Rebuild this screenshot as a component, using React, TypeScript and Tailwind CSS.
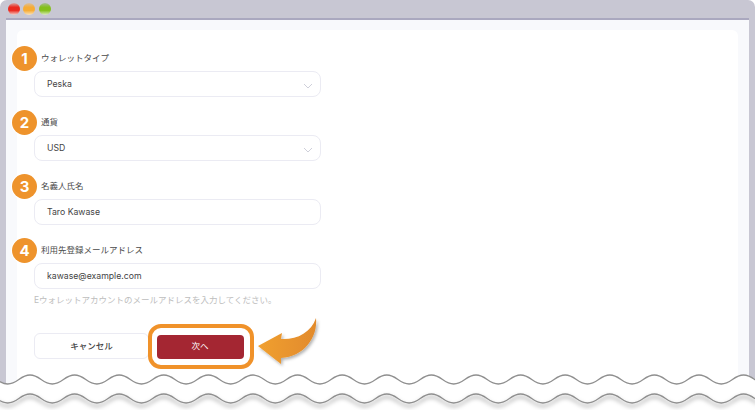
import React from "react";

const PERIOD = 44.6;
function wave(y: number, amp: number, phase: number) {
  let d = `M ${-PERIOD + phase} ${y - amp}`;
  for (let x = -PERIOD + phase; x < 800; x += PERIOD) {
    d += ` C ${x + PERIOD * 0.22} ${y - amp}, ${x + PERIOD * 0.28} ${y + amp}, ${x + PERIOD / 2} ${y + amp}`;
    d += ` S ${x + PERIOD * 0.78} ${y - amp}, ${x + PERIOD} ${y - amp}`;
  }
  return d;
}

function Badge({ n }: { n: number }) {
  return (
    <div className="absolute left-[-22px] top-[-6px] flex h-[25px] w-[25px] items-center justify-center rounded-full bg-[#ee932c] text-[15px] font-bold leading-none text-white shadow-[0_0_0_1px_#ffffff]">
      {n}
    </div>
  );
}

function Chevron() {
  return (
    <svg width="10" height="6" viewBox="0 0 10 6" fill="none" className="absolute right-[7px] top-[11px]">
      <path d="M1 1 L5 5 L9 1" stroke="#c9cbd6" strokeWidth="0.9" />
    </svg>
  );
}

function Field({ n, label, value, select, mb }: { n: number; label: string; value: string; select?: boolean; mb: string }) {
  return (
    <div className={`relative w-[287px] ${mb}`}>
      <Badge n={n} />
      <div className="mb-[6px] h-[13px] pl-[7px] text-[8.5px] leading-[13px] text-[#4a4a4a]">{label}</div>
      <div className="relative flex h-[26px] items-center rounded-[8px] border border-[#ebebf3] bg-white pl-[12px] pt-[1px] text-[8.7px] text-[#444444]">
        {value}
        {select && <Chevron />}
      </div>
    </div>
  );
}

export default function App() {
  const w1 = wave(379.5, 4.5, 30);
  const w2 = wave(398.5, 4.5, 30);
  return (
    <div className="relative h-[410px] w-[755px] overflow-hidden bg-white font-['Inter','Noto_Sans_CJK_JP',sans-serif]">
      <div className="flex h-full flex-col rounded-t-[7px] bg-[#c8c7d3] px-[6px]">
        <div className="flex h-[18px] shrink-0 items-center gap-[3.5px] pl-[1.5px]">
          <span className="h-[12px] w-[12px] shrink-0 rounded-full bg-[linear-gradient(#d9a6a2_0%,#ea2a20_35%,#ea2a20_62%,#f4d2cc_100%)]" />
          <span className="h-[12px] w-[12px] shrink-0 rounded-full bg-[linear-gradient(#d9c0a0_0%,#f6ac36_35%,#f6ac36_62%,#f9e3bd_100%)]" />
          <span className="h-[12px] w-[12px] shrink-0 rounded-full bg-[linear-gradient(#a9bd96_0%,#84c01c_35%,#84c01c_62%,#dcebc0_100%)]" />
        </div>
        <div className="flex-1 border-t-2 border-[#aaa8bf] bg-[#f8f9fc] px-[11px] pt-[10px]">
          <div className="h-full rounded-t-[6px] bg-white pl-[17px] pt-[22px]">
            <Field n={1} label="ウォレットタイプ" value="Peska" select mb="mb-[19px]" />
            <Field n={2} label="通貨" value="USD" select mb="mb-[19px]" />
            <Field n={3} label="名義人氏名" value="Taro Kawase" mb="mb-[19px]" />
            <Field n={4} label="利用先登録メールアドレス" value="kawase@example.com" mb="mb-[5px]" />
            <div className="h-[13px] text-[8.5px] leading-[13px] text-[#bdbdbd]">Eウォレットアカウントのメールアドレスを入力してください。</div>
            <div className="mt-[17px] flex items-center">
              <div className="mb-[1px] flex h-[26px] w-[115px] items-center justify-center rounded-[6px] border border-[#ebebf3] bg-white text-[8.5px] font-medium text-[#444444]">キャンセル</div>
              <div className="ml-[-1px] flex h-[45px] w-[106px] items-center justify-center rounded-[13px] border-[4px] border-[#f0922a] bg-white pr-[2px]">
                <div className="flex h-[24px] w-[87px] items-center justify-center rounded-[4px] bg-[#a42632] text-[8.5px] text-white">次へ</div>
              </div>
            </div>
          </div>
        </div>
      </div>

      <svg className="absolute left-0 top-0" width="755" height="410" viewBox="0 0 755 410" fill="none">
        <defs>
          <filter id="s" x="-5%" y="-50%" width="110%" height="300%">
            <feDropShadow dx="0" dy="3" stdDeviation="2.2" floodColor="#000" floodOpacity="0.5" />
          </filter>
          <linearGradient id="arrow" x1="0" y1="0" x2="1" y2="0">
            <stop offset="0" stopColor="#f0a030" />
            <stop offset="1" stopColor="#e28a2c" />
          </linearGradient>
          <filter id="a" x="-20%" y="-20%" width="140%" height="140%">
            <feDropShadow dx="1.5" dy="2" stdDeviation="1.5" floodColor="#000" floodOpacity="0.3" />
          </filter>
        </defs>
        <path d="M258 346 L282 333 L281 339 C296 340 311 333 316 318 C318 337 304 357 281 358 L281 364 Z" fill="url(#arrow)" filter="url(#a)" />
        <path d={`${w1} L 800 410 L -50 410 Z`} fill="white" />
        <path d={w2} stroke="#8f8f8f" strokeWidth="1.3" filter="url(#s)" />
        <path d={w1} stroke="#8f8f8f" strokeWidth="1.3" />
      </svg>
    </div>
  );
}
